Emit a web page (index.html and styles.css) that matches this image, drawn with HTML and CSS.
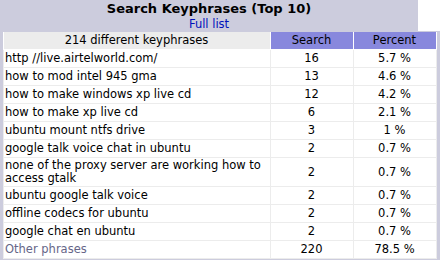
FILE: index.html
```html
<!DOCTYPE html>
<html>
<head>
<meta charset="utf-8">
<link rel="stylesheet" href="styles.css">
</head>
<body>
<div class="box">
  <div class="head">
    <div class="title">Search Keyphrases (Top 10)<br><a class="link" href="#">Full list</a></div>
    <div class="blank"></div>
  </div>
  <div class="frame">
    <table class="data">
      <colgroup><col class="c-kw"><col class="c-num"><col class="c-num"></colgroup>
      <thead>
        <tr><th class="th-kw">214 different keyphrases</th><th class="th-num">Search</th><th class="th-num">Percent</th></tr>
      </thead>
      <tbody>
        <tr><td class="kw">http //live.airtelworld.com/</td><td>16</td><td>5.7 %</td></tr>
        <tr><td class="kw">how to mod intel 945 gma</td><td>13</td><td>4.6 %</td></tr>
        <tr><td class="kw">how to make windows xp live cd</td><td>12</td><td>4.2 %</td></tr>
        <tr><td class="kw">how to make xp live cd</td><td>6</td><td>2.1 %</td></tr>
        <tr><td class="kw">ubuntu mount ntfs drive</td><td>3</td><td>1 %</td></tr>
        <tr><td class="kw">google talk voice chat in ubuntu</td><td>2</td><td>0.7 %</td></tr>
        <tr class="tall"><td class="kw">none of the proxy server are working how to access gtalk</td><td>2</td><td>0.7 %</td></tr>
        <tr><td class="kw">ubuntu google talk voice</td><td>2</td><td>0.7 %</td></tr>
        <tr><td class="kw">offline codecs for ubuntu</td><td>2</td><td>0.7 %</td></tr>
        <tr><td class="kw">google chat en ubuntu</td><td>2</td><td>0.7 %</td></tr>
        <tr><td class="kw other">Other phrases</td><td>220</td><td>78.5 %</td></tr>
      </tbody>
    </table>
  </div>
</div>
</body>
</html>
```
FILE: styles.css
```css
html, body {
  margin: 0;
  padding: 0;
  background: #ffffff;
}
body {
  font-family: "DejaVu Sans", Verdana, sans-serif;
  font-size: 11.5px;
  color: #000000;
}
.box {
  width: 440px;
}
.head {
  display: flex;
}
.title {
  width: 418px;
  height: 31px;
  box-sizing: border-box;
  padding: 1px 1px 0 1px;
  background: #ccccdd;
  text-align: center;
  font-weight: bold;
  font-size: 13px;
  line-height: 15px;
}
.link {
  font-weight: normal;
  font-size: 11.5px;
  color: #0011bb;
  text-decoration: none;
}
.blank {
  flex: 1;
  background: #ffffff;
}
.frame {
  background: #ccccdd;
  padding: 1px 3px 2px 3px;
}
.data {
  width: 434px;
  table-layout: fixed;
  border-collapse: collapse;
  background: #ffffff;
}
.c-kw { width: 267px; }
.c-num { width: 83px; }
th {
  font-weight: normal;
  line-height: 13px;
  padding: 2px 2px 2px 1px;
  text-align: center;
  border: 1px solid #ffffff;
  border-top: 0;
}
.th-kw {
  background: #ececec;
}
.th-num {
  background: #8888dd;
}
td {
  line-height: 13px;
  padding: 2px 2px 2px 1px;
  border: 1px solid #ececec;
  text-align: center;
  vertical-align: middle;
}
.tall td {
  padding-top: 1px;
  padding-bottom: 1px;
}
td.kw {
  text-align: left;
  padding-left: 1px;
}
.other {
  color: #666688;
}
```
